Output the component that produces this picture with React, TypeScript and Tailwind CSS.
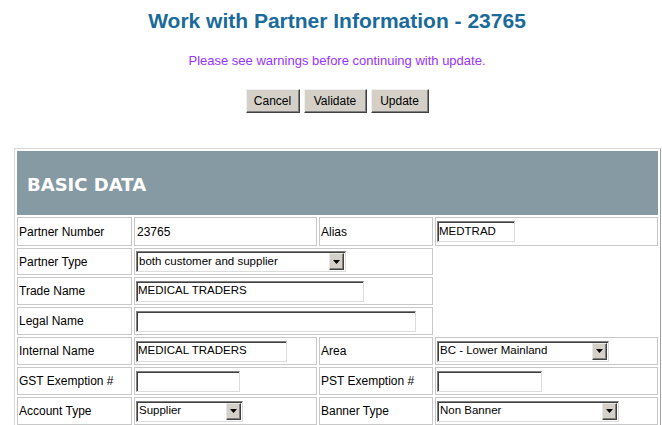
import React from "react";

const SANS = "font-['Liberation_Sans',Arial,sans-serif]";

function Input({ w, value }: { w: string; value?: string }) {
  return (
    <div
      className={`h-[21px] ${w} bg-white border border-t-[#7f7f7f] border-l-[#7f7f7f] border-r-[#dcdcdc] border-b-[#dcdcdc] shadow-[inset_1px_1px_0_#404040] flex items-center pl-[1px] text-[11.5px] text-black leading-none whitespace-nowrap overflow-hidden`}
    >
      {value}
    </div>
  );
}

function Select({ w, value }: { w: string; value: string }) {
  return (
    <div
      className={`h-[21px] ${w} bg-white border border-t-[#7f7f7f] border-l-[#7f7f7f] border-r-[#dcdcdc] border-b-[#dcdcdc] shadow-[inset_1px_1px_0_#404040] flex items-center justify-between pl-[2px] pr-[1px] text-[11.5px] text-black leading-none whitespace-nowrap`}
    >
      <span>{value}</span>
      <div className="w-[15px] h-[17px] bg-[#d4d0c8] border border-t-[#e8e8e8] border-l-[#e8e8e8] border-r-[#404040] border-b-[#404040] shadow-[inset_-1px_-1px_0_#808080] flex items-center justify-center">
        <svg width="7" height="4" viewBox="0 0 7 4">
          <path d="M0 0h7l-3.5 4z" fill="#000" />
        </svg>
      </div>
    </div>
  );
}

function Cell({
  children,
  span,
  h = "h-[28px]",
}: {
  children?: React.ReactNode;
  span?: boolean;
  h?: string;
}) {
  return (
    <div
      className={`${h} border border-[#c8c8c8] px-[1px] flex items-center text-[12px] text-black whitespace-nowrap ${span ? "col-span-2" : ""}`}
    >
      {children}
    </div>
  );
}

function Btn({ w, label }: { w: string; label: string }) {
  return (
    <div
      className={`h-[24px] ${w} bg-[#d4d0c8] border border-t-[#f0f0f0] border-l-[#f0f0f0] border-r-[#404040] border-b-[#404040] shadow-[inset_-1px_-1px_0_#808080] flex items-center justify-center text-[12px] text-black`}
    >
      {label}
    </div>
  );
}

export default function App() {
  return (
    <div className={`w-[662px] h-[425px] overflow-hidden bg-white ${SANS}`}>
      <div className="w-[674px]">
        <div className="h-[40px] flex items-center justify-center">
          <span className="text-[21px] font-bold text-[#1a6a9b] leading-none">
            Work with Partner Information - 23765
          </span>
        </div>
        <div className="h-[40px] flex items-center justify-center">
          <span className="text-[13px] text-[#9933ff] leading-none">
            Please see warnings before continuing with update.
          </span>
        </div>
        <div className="mt-[9px] flex justify-center gap-[4px]">
          <Btn w="w-[54px]" label="Cancel" />
          <Btn w="w-[63px]" label="Validate" />
          <Btn w="w-[58px]" label="Update" />
        </div>
        <div className="mt-[35px] ml-[14px] w-[647px] border border-t-[#d8d8d8] border-l-[#d8d8d8] border-r-[#a0a0a0] border-b-[#a0a0a0] p-[2px]">
          <div className="grid grid-cols-[115px_183px_114px_223px] gap-[2px]">
            <div className="col-span-4 h-[64px] bg-[#869aa3] flex items-center pl-[10px] pt-[3px]">
              <span className="font-['DejaVu_Sans',Verdana,sans-serif] font-bold text-[18px] text-white leading-none">
                BASIC DATA
              </span>
            </div>

            <Cell h="h-[29px]">Partner Number</Cell>
            <Cell h="h-[29px]">
              <span className="pl-[1px]">23765</span>
            </Cell>
            <Cell h="h-[29px]">Alias</Cell>
            <Cell h="h-[29px]">
              <Input w="w-[78px]" value="MEDTRAD" />
            </Cell>

            <Cell h="h-[27px]">Partner Type</Cell>
            <Cell h="h-[27px]" span>
              <Select w="w-[210px]" value="both customer and supplier" />
            </Cell>
            <div />

            <Cell>Trade Name</Cell>
            <Cell span>
              <Input w="w-[228px]" value="MEDICAL TRADERS" />
            </Cell>
            <div />

            <Cell>Legal Name</Cell>
            <Cell span>
              <Input w="w-[280px]" />
            </Cell>
            <div />

            <Cell>Internal Name</Cell>
            <Cell>
              <Input w="w-[151px]" value="MEDICAL TRADERS" />
            </Cell>
            <Cell>Area</Cell>
            <Cell>
              <Select w="w-[172px]" value="BC - Lower Mainland" />
            </Cell>

            <Cell>GST Exemption #</Cell>
            <Cell>
              <Input w="w-[104px]" />
            </Cell>
            <Cell>PST Exemption #</Cell>
            <Cell>
              <Input w="w-[105px]" />
            </Cell>

            <Cell>Account Type</Cell>
            <Cell>
              <Select w="w-[107px]" value="Supplier" />
            </Cell>
            <Cell>Banner Type</Cell>
            <Cell>
              <Select w="w-[182px]" value="Non Banner" />
            </Cell>
          </div>
        </div>
      </div>
    </div>
  );
}
